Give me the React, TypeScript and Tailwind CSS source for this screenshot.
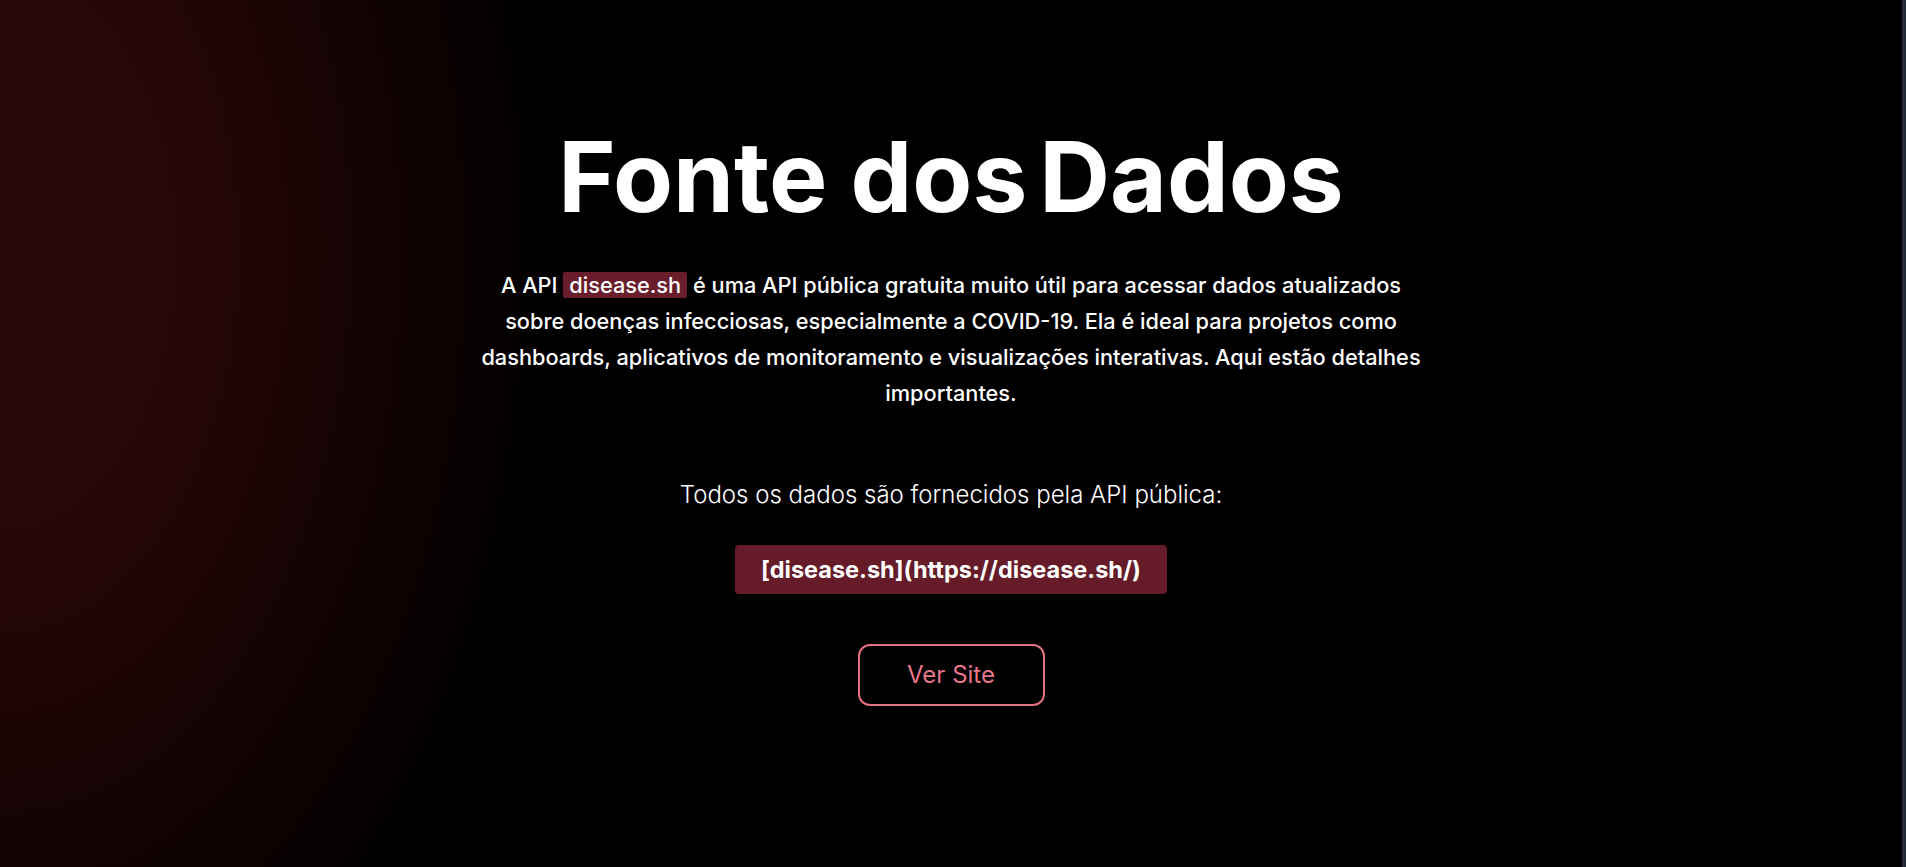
export default function App() {
  return (
    <div className="flex min-h-screen w-full bg-black font-['Inter',sans-serif] text-white">
      <main className="flex min-h-[867px] flex-1 flex-col items-center bg-[radial-gradient(ellipse_560px_900px_at_0_250px,#2b0808_0%,#2a0707_30%,#000_100%)] pt-[128px]">
        {/* Heading */}
        <h1 className="text-[98px] font-bold leading-none">
          Fonte dos<span className="ml-3">Dados</span>
        </h1>

        <p className="mt-[41px] max-w-[950px] text-center text-[21.75px] font-medium leading-9">
          A API{" "}
          <span className="rounded-[2px] bg-[#6a1e2b] px-[6px]">disease.sh</span>{" "}
          é uma API pública gratuita muito útil para acessar dados atualizados sobre doenças
          infecciosas, especialmente a COVID-19. Ela é ideal para projetos como dashboards,
          aplicativos de monitoramento e visualizações interativas. Aqui estão detalhes
          importantes.
        </p>

        <p className="mt-[68px] text-2xl font-light">Todos os dados são fornecidos pela API pública:</p>

        <div className="mt-[34px] flex h-[49px] items-center rounded-[4px] bg-[#651c28] px-[26px]">
          <span className="text-[23.5px] font-bold">[disease.sh](https://disease.sh/)</span>
        </div>

        <a
          href="#"
          className="mt-[50px] flex h-[62px] w-[187px] items-center justify-center rounded-xl border-2 border-[#e4727f] text-2xl text-[#e8768a]"
        >
          Ver Site
        </a>
      </main>
      {/* thin scrollbar track */}
      <div className="w-1 shrink-0 bg-[#232a35]" />
    </div>
  );
}
